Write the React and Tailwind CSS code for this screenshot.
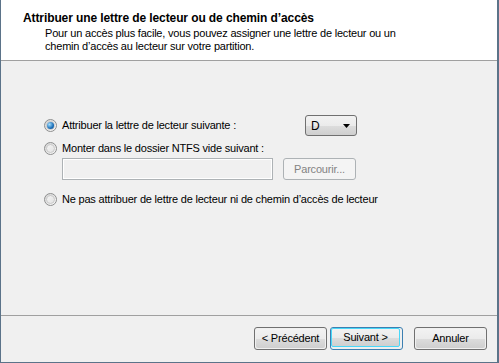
import React, { useState } from 'react';

const font = { fontFamily: '"Liberation Sans", Arial, sans-serif' };

function Radio({ checked, onClick }) {
  return (
    <span onClick={onClick} className="relative inline-flex w-[13px] h-[13px] shrink-0 rounded-full border border-[#8e8f8f] bg-gradient-to-br from-[#d4d4d4] to-[#fbfbfb] items-center justify-center">
      <span className="w-[9px] h-[9px] rounded-full bg-gradient-to-br from-[#f4f4f4] to-[#e3e3e3] border border-[#c9c9c9] flex items-center justify-center">
        {checked && <span className="w-[7px] h-[7px] rounded-full bg-[radial-gradient(circle_at_35%_35%,#a6e0ff,#1c6fb8_60%,#0d4a86)]" />}
      </span>
    </span>
  );
}

function Btn({ children, primary, disabled }) {
  if (disabled) {
    return (
      <div className="w-[73px] h-[22px] rounded-[3px] border border-[#adb2b5] bg-[#f4f4f4] flex items-center justify-center text-[#838383]">
        {children}
      </div>
    );
  }
  return (
    <div className={`w-[73px] h-[23px] rounded-[3px] border ${primary ? 'border-[#3c7fb1]' : 'border-[#707070]'} p-px`}>
      <div className={`w-full h-full rounded-[2px] ${primary ? 'border border-[#48d8f9] -m-px w-[calc(100%+2px)] h-[calc(100%+2px)]' : ''} bg-[linear-gradient(#f2f2f2_0%,#ebebeb_50%,#dddddd_50%,#cfcfcf_100%)] flex items-center justify-center text-black`}>
        {children}
      </div>
    </div>
  );
}

export default function App() {
  const [choice, setChoice] = useState(0);
  return (
    <div style={font} className="w-[499px] h-[363px] flex flex-col bg-[#f0f0f0] border-l border-r-2 border-b border-[#5b7389] text-[11px] tracking-[-0.2px] text-black overflow-hidden">
      <div className="h-[61px] shrink-0 bg-white border-b border-[#a0a0a0] pt-[11px]">
        <div className="pl-[22px] font-bold text-[12px] tracking-[-0.1px] leading-[14px]">Attribuer une lettre de lecteur ou de chemin d’accès</div>
        <div className="pl-[44px] pt-[2px] leading-[13px] whitespace-nowrap">Pour un accès plus facile, vous pouvez assigner une lettre de lecteur ou un<br />chemin d’accès au lecteur sur votre partition.</div>
      </div>

      <div className="flex-1 flex flex-col pl-[43px] pt-[54px]">
        <div className="flex items-center h-[21px]">
          <Radio checked={choice === 0} onClick={() => setChoice(0)} />
          <span className="ml-[5px] w-[243px]">Attribuer la lettre de lecteur suivante :</span>
          <div className="w-[52px] h-[21px] rounded-[3px] border border-[#707070] bg-[linear-gradient(#f2f2f2_0%,#ebebeb_50%,#dddddd_50%,#cfcfcf_100%)] flex items-center pl-[5px] pr-[6px] justify-between text-[12px]">
            <span>D</span>
            <svg width="7" height="4" viewBox="0 0 7 4"><path d="M0 0h7L3.5 4z" fill="#000" /></svg>
          </div>
        </div>
        <div className="flex items-center h-[13px] mt-[6px]">
          <Radio checked={choice === 1} onClick={() => setChoice(1)} />
          <span className="ml-[5px]">Monter dans le dossier NTFS vide suivant :</span>
        </div>
        <div className="flex items-center mt-[3px] ml-[18px]">
          <div className="w-[211px] h-[22px] border border-[#adb2b5] bg-[#f0f0f0] shadow-[inset_0_0_0_1px_#ffffff]" />
          <div className="ml-[10px]"><Btn disabled>Parcourir...</Btn></div>
        </div>
        <div className="flex items-center h-[13px] mt-[13px]">
          <Radio checked={choice === 2} onClick={() => setChoice(2)} />
          <span className="ml-[5px]">Ne pas attribuer de lettre de lecteur ni de chemin d’accès de lecteur</span>
        </div>
      </div>

      <div className="h-[47px] shrink-0 border-t border-[#a0a0a0] flex items-start pt-[11px] pl-[253px]">
        <Btn>&lt; Précédent</Btn>
        <div className="ml-[3px]"><Btn primary>Suivant &gt;</Btn></div>
        <div className="ml-[11px]"><Btn>Annuler</Btn></div>
      </div>
    </div>
  );
}
